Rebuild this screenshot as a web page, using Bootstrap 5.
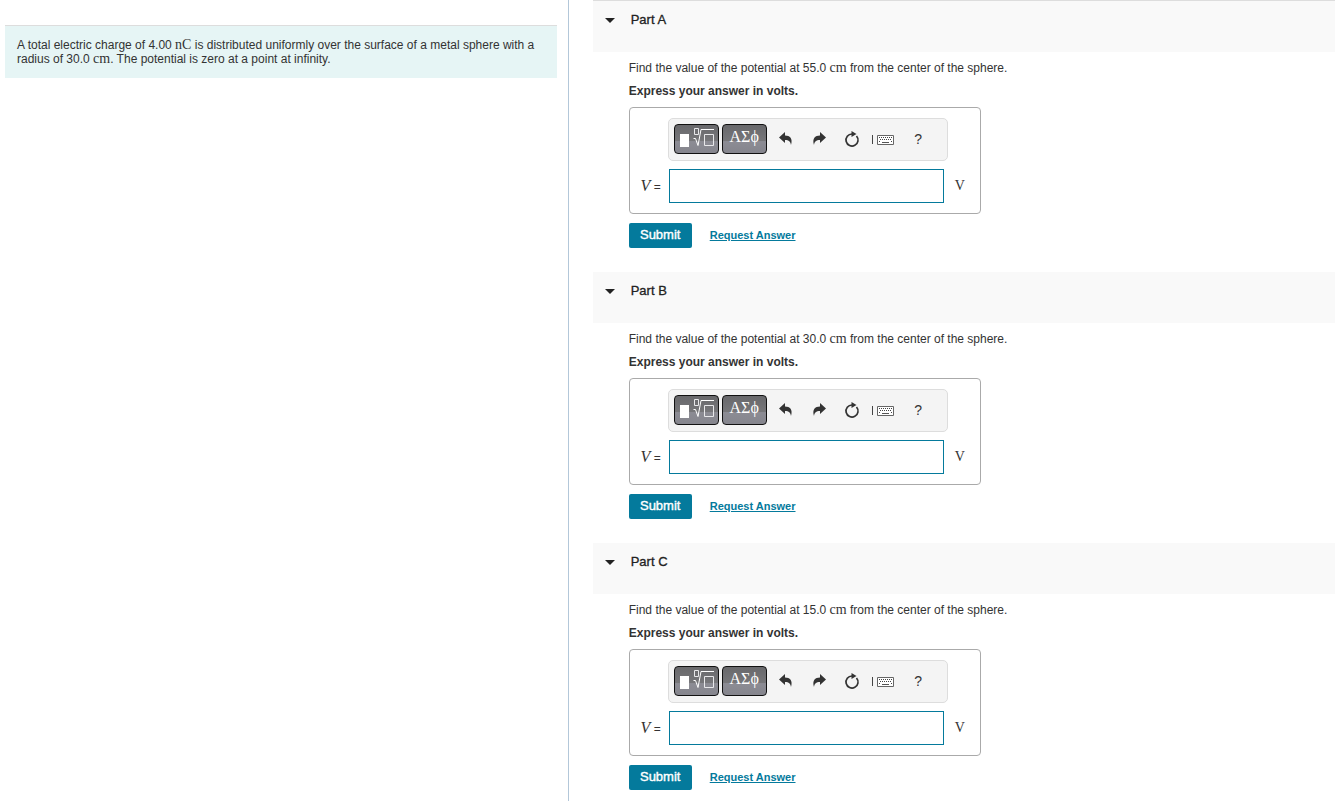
<!DOCTYPE html>
<html lang="en">
<head>
<meta charset="utf-8">
<meta name="viewport" content="width=device-width, initial-scale=1">
<title>Electric potential of a charged sphere</title>
<link rel="stylesheet" href="https://cdn.jsdelivr.net/npm/bootstrap@5.3.0/dist/css/bootstrap.min.css">
<style>
body{font:12px/14px "Liberation Sans",Arial,sans-serif;color:#333;background:#fff}
.problem-pane{flex:0 0 42.6%;padding:25px 11px 0 5px;border-right:1px solid #b3c7d9}
.intro{padding:12px;background:#e6f5f5;border-top:1px solid #ddd}
.parts-pane{min-width:0;padding-left:24px}
.math{font-family:"Liberation Serif","Times New Roman",serif;font-size:14px;line-height:1}
.parts-list{border-top:1px solid #ddd}
.part-head{height:51px;padding:11px 12px;background:#f9f9f9}
.part-head h2{font-size:13px;line-height:16px;font-weight:400;-webkit-text-stroke:.3px #222;color:#222}
.caret{width:10px;height:5px;margin-top:6px}
.part-body{padding:9px 12px 24px 36px}
.part:last-child .part-body{padding-bottom:0}
.stack{gap:9px}
.answer{width:352px;max-width:100%;padding:10px 0;border:1px solid #aaa;border-radius:4px}
.tools{width:280px;height:43px;padding:5px;margin:0 0 8px 38px;background:#f4f4f4;border:1px solid #ddd;border-radius:5px}
.pal{width:45px;height:30px;margin-right:3px;padding:0;border:1px solid #111;border-radius:4px;background:linear-gradient(#68686b,#77777a 58%,#8c8c94 59%,#85858d);color:#fff;font:16px/20px "Liberation Serif",serif}
.pal svg,.tool svg{display:block}
.greek{padding-bottom:4px}
.tool{width:33px;height:30px;padding:0;border:0;background:none;color:#333;font:14px/28px "Liberation Sans",sans-serif}
.tool svg{margin:auto}
.lbl{width:39px;padding-right:8px}
.lbl .math{font-size:16px}
.entry{width:275px;height:34px;padding:4px 8px;border:1px solid #047a9c;border-radius:0;background:#fff;font-size:14px}
.unit{margin-left:11px}
.submit{width:63px;height:25px;padding:0 0 2px;border:0;border-radius:2px;background:#047a9c;color:#fff;font-size:13px;line-height:22px;-webkit-text-stroke:.4px #fff}
.request{margin-left:18px;padding-bottom:2px;font-size:11px;font-weight:700;color:#047a9c}
</style>
</head>
<body>
<svg class="d-none" aria-hidden="true">
 <symbol id="root" viewBox="0 0 43 28"><path d="M5 9h9v13H5z" fill="#fff"/><path d="M19.500 3.500h4v6h-4zM29.500 9.500h9v11h-9z" fill="none" stroke="#e8e8ea"/><path d="M18.500 13.500h2l2.500 7L26 4.500h13" fill="none" stroke="#fff"/></symbol>
 <symbol id="undo" viewBox="0 0 14 14"><path d="M6 0v3.500c5 0 8 3 6 9.500C11.500 9.500 10 8 6 8v3L0 5.500z" fill="currentColor"/></symbol>
 <symbol id="redo" viewBox="0 0 14 14"><path d="M8 0v3.500c-5 0-8 3-6 9.500C2.500 9.500 4 8 8 8v3l6-5.500z" fill="currentColor"/></symbol>
 <symbol id="reset" viewBox="0 0 16 18"><path d="M12.500 6A6 6 0 1 1 8 4" fill="none" stroke="currentColor" stroke-width="1.700"/><path d="M7.500 1l5 3-5 3z" fill="currentColor"/></symbol>
 <symbol id="keys" viewBox="0 0 28 14"><path d="M1.500 3v9" stroke="#444"/><path d="M6.500 3.500h16v9h-16z" fill="#fff" stroke="#666"/><path d="M8 5.500h13M9 7.500h12M8 9.500h2M20 9.500h1" stroke="#444" stroke-dasharray="1 1"/><path d="M11 10.500h7" stroke="#555"/></symbol>
 <symbol id="down" viewBox="0 0 10 5"><path d="M0 0h10L5 5z" fill="#222"/></symbol>
</svg>
<div class="d-flex min-vh-100">
 <aside class="problem-pane"><div class="intro">A total electric charge of 4.00 <span class="math">nC</span> is distributed uniformly over the surface of a metal sphere with a radius of 30.0 <span class="math">cm</span>. The potential is zero at a point at infinity.</div></aside>
 <main class="parts-pane flex-grow-1"><div class="parts-list">

 <section class="part">
  <header class="part-head d-flex"><svg class="caret" aria-hidden="true"><use href="#down"/></svg><h2 class="m-0 ms-3">Part A</h2></header>
  <div class="part-body"><form class="stack d-flex flex-column">
   <div>Find the value of the potential at 55.0 <span class="math">cm</span> from the center of the sphere.</div>
   <div class="fw-bold">Express your answer in volts.</div>
   <div class="answer">
    <div class="tools d-flex" role="toolbar" aria-label="Equation tools">
     <button type="button" class="pal" aria-label="Templates"><svg width="43" height="28"><use href="#root"/></svg></button>
     <button type="button" class="pal greek">ΑΣϕ</button>
     <button type="button" class="tool" aria-label="Undo"><svg width="14" height="14"><use href="#undo"/></svg></button>
     <button type="button" class="tool" aria-label="Redo"><svg width="14" height="14"><use href="#redo"/></svg></button>
     <button type="button" class="tool" aria-label="Reset"><svg width="16" height="18"><use href="#reset"/></svg></button>
     <button type="button" class="tool" aria-label="Keyboard shortcuts"><svg width="28" height="14"><use href="#keys"/></svg></button>
     <button type="button" class="tool">?</button>
    </div>
    <div class="d-flex align-items-center"><label class="lbl text-end" for="va"><i class="math">V</i> =</label><input class="entry" id="va" type="text"><span class="math unit">V</span></div>
   </div>
   <div class="d-flex align-items-center"><button type="submit" class="submit">Submit</button><a class="request" href="#">Request Answer</a></div>
  </form></div>
 </section>

 <section class="part">
  <header class="part-head d-flex"><svg class="caret" aria-hidden="true"><use href="#down"/></svg><h2 class="m-0 ms-3">Part B</h2></header>
  <div class="part-body"><form class="stack d-flex flex-column">
   <div>Find the value of the potential at 30.0 <span class="math">cm</span> from the center of the sphere.</div>
   <div class="fw-bold">Express your answer in volts.</div>
   <div class="answer">
    <div class="tools d-flex" role="toolbar" aria-label="Equation tools">
     <button type="button" class="pal" aria-label="Templates"><svg width="43" height="28"><use href="#root"/></svg></button>
     <button type="button" class="pal greek">ΑΣϕ</button>
     <button type="button" class="tool" aria-label="Undo"><svg width="14" height="14"><use href="#undo"/></svg></button>
     <button type="button" class="tool" aria-label="Redo"><svg width="14" height="14"><use href="#redo"/></svg></button>
     <button type="button" class="tool" aria-label="Reset"><svg width="16" height="18"><use href="#reset"/></svg></button>
     <button type="button" class="tool" aria-label="Keyboard shortcuts"><svg width="28" height="14"><use href="#keys"/></svg></button>
     <button type="button" class="tool">?</button>
    </div>
    <div class="d-flex align-items-center"><label class="lbl text-end" for="vb"><i class="math">V</i> =</label><input class="entry" id="vb" type="text"><span class="math unit">V</span></div>
   </div>
   <div class="d-flex align-items-center"><button type="submit" class="submit">Submit</button><a class="request" href="#">Request Answer</a></div>
  </form></div>
 </section>

 <section class="part">
  <header class="part-head d-flex"><svg class="caret" aria-hidden="true"><use href="#down"/></svg><h2 class="m-0 ms-3">Part C</h2></header>
  <div class="part-body"><form class="stack d-flex flex-column">
   <div>Find the value of the potential at 15.0 <span class="math">cm</span> from the center of the sphere.</div>
   <div class="fw-bold">Express your answer in volts.</div>
   <div class="answer">
    <div class="tools d-flex" role="toolbar" aria-label="Equation tools">
     <button type="button" class="pal" aria-label="Templates"><svg width="43" height="28"><use href="#root"/></svg></button>
     <button type="button" class="pal greek">ΑΣϕ</button>
     <button type="button" class="tool" aria-label="Undo"><svg width="14" height="14"><use href="#undo"/></svg></button>
     <button type="button" class="tool" aria-label="Redo"><svg width="14" height="14"><use href="#redo"/></svg></button>
     <button type="button" class="tool" aria-label="Reset"><svg width="16" height="18"><use href="#reset"/></svg></button>
     <button type="button" class="tool" aria-label="Keyboard shortcuts"><svg width="28" height="14"><use href="#keys"/></svg></button>
     <button type="button" class="tool">?</button>
    </div>
    <div class="d-flex align-items-center"><label class="lbl text-end" for="vc"><i class="math">V</i> =</label><input class="entry" id="vc" type="text"><span class="math unit">V</span></div>
   </div>
   <div class="d-flex align-items-center"><button type="submit" class="submit">Submit</button><a class="request" href="#">Request Answer</a></div>
  </form></div>
 </section>

 </div></main>
</div>
<script src="https://cdn.jsdelivr.net/npm/bootstrap@5.3.0/dist/js/bootstrap.bundle.min.js"></script>
</body>
</html>
